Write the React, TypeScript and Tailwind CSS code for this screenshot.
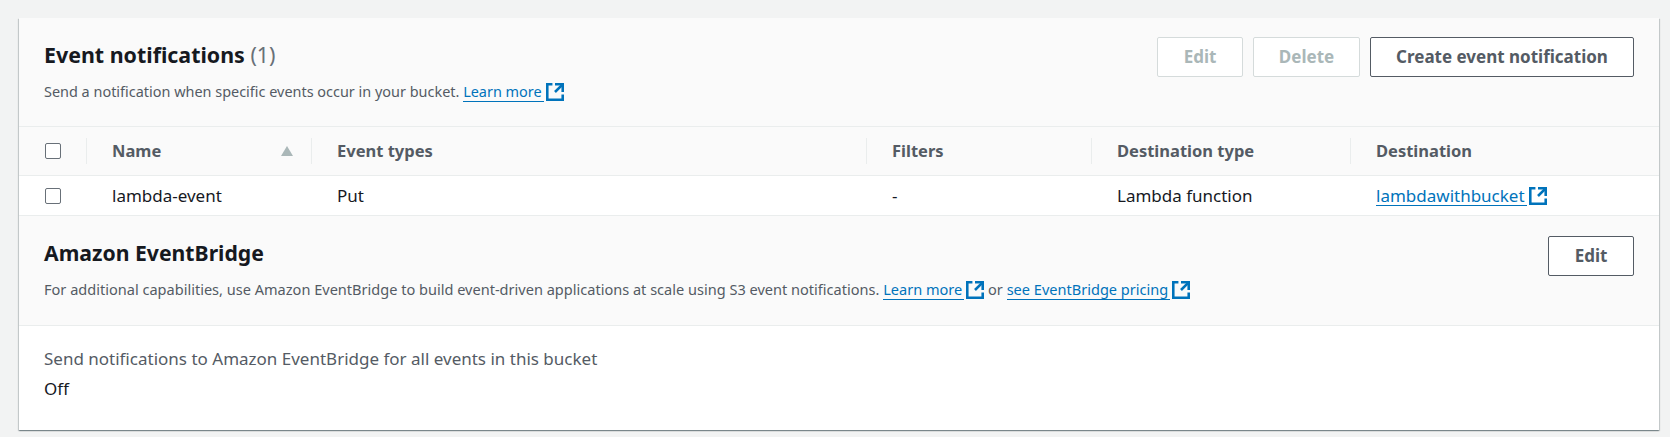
function Ext() {
  return (
    <svg viewBox="1 1 14 14" className="ml-[2px] inline-block h-[18px] w-[18px] shrink-0 fill-none stroke-[#0073bb] stroke-2">
      <path d="M14 8.01v-6H8" />
      <path d="M14.02 2 8 8" />
      <path d="M6 2H2v12h12v-4" />
    </svg>
  );
}

function ExtLink({ children }: { children: string }) {
  return (
    <span className="inline-flex items-center text-[#0073bb]">
      <a className="border-b border-[#0073bb] pr-[2px] leading-[19px]">{children}</a>
      <Ext />
    </span>
  );
}

function Btn({ label, w, off }: { label: string; w: string; off?: boolean }) {
  return (
    <button
      className={`flex h-10 items-center justify-center rounded-[2px] border bg-white text-[17px] font-bold ${w} ${
        off ? "border-[#d5dbdb] text-[#aab7b8]" : "border-[#545b64] text-[#545b64]"
      }`}
    >
      {label}
    </button>
  );
}

function Box() {
  return <div className="h-4 w-4 rounded-[2px] border border-[#687078] bg-white" />;
}

const cols = "grid grid-cols-[67px_225px_555px_225px_259px_1fr] items-center";

function Th({ label, sort }: { label: string; sort?: boolean }) {
  return (
    <div className="flex h-[26px] items-center justify-between border-l border-[#eaeded] pl-[25px] pr-[18px] text-[16.5px] font-bold text-[#545b64]">
      <span>{label}</span>
      {sort && (
        <svg viewBox="0 0 12 10" className="h-[10px] w-3 fill-[#aab7b8]">
          <path d="M6 0 12 10H0Z" />
        </svg>
      )}
    </div>
  );
}

export default function App() {
  return (
    <div className="min-h-[437px] bg-[#f2f3f3] pb-[7px] pl-[19px] pr-[11px] pt-[18px] font-['Noto_Sans',sans-serif] text-[17px] text-[#16191f]">
      <div className="bg-white shadow-[0_1px_1px_0_rgba(0,28,36,0.3),1px_1px_1px_0_rgba(0,28,36,0.15),-1px_1px_1px_0_rgba(0,28,36,0.15)]">
        <div className="flex h-[109px] justify-between border-b border-[#eaeded] bg-[#fafafa] pl-[25px] pr-[25px] pt-[19px]">
          <div className="pt-[4px]">
            <h2 className="text-[21.4px] font-bold leading-[28px]">
              Event notifications <span className="font-normal text-[#687078]">(1)</span>
            </h2>
            <p className="mt-[12px] flex items-center text-[14.45px] text-[#545b64]">
              Send a notification when specific events occur in your bucket.&nbsp;<ExtLink>Learn more</ExtLink>
            </p>
          </div>
          <div className="flex gap-[10px]">
            <Btn label="Edit" w="w-[86px]" off />
            <Btn label="Delete" w="w-[107px]" off />
            <Btn label="Create event notification" w="w-[264px]" />
          </div>
        </div>

        <div className={`${cols} h-[49px] border-b border-[#eaeded] bg-[#fafafa]`}>
          <div className="pl-[26px]"><Box /></div>
          <Th label="Name" sort />
          <Th label="Event types" />
          <Th label="Filters" />
          <Th label="Destination type" />
          <Th label="Destination" />
        </div>
        <div className={`${cols} h-[40px] border-b border-[#eaeded] bg-white`}>
          <div className="pl-[26px]"><Box /></div>
          <div className="pl-[26px]">lambda-event</div>
          <div className="pl-[26px]">Put</div>
          <div className="pl-[26px]">-</div>
          <div className="pl-[26px]">Lambda function</div>
          <div className="pl-[26px]"><ExtLink>lambdawithbucket</ExtLink></div>
        </div>

        <div className="flex h-[110px] justify-between border-b border-[#eaeded] bg-[#fafafa] pl-[25px] pr-[25px] pt-[20px]">
          <div className="pt-[3px]">
            <h2 className="text-[21.2px] font-bold leading-[28px]">Amazon EventBridge</h2>
            <p className="mt-[12px] flex items-center text-[14.55px] text-[#545b64]">
              For additional capabilities, use Amazon EventBridge to build event-driven applications at scale using S3 event notifications.&nbsp;
              <ExtLink>Learn more</ExtLink>&nbsp;or&nbsp;<ExtLink>see EventBridge pricing</ExtLink>
            </p>
          </div>
          <Btn label="Edit" w="w-[86px]" />
        </div>

        <div className="h-[104px] bg-white pl-[25px] pt-[21px]">
          <div className="leading-[24px] text-[#545b64]">Send notifications to Amazon EventBridge for all events in this bucket</div>
          <div className="mt-[6px] leading-[24px]">Off</div>
        </div>
      </div>
    </div>
  );
}
